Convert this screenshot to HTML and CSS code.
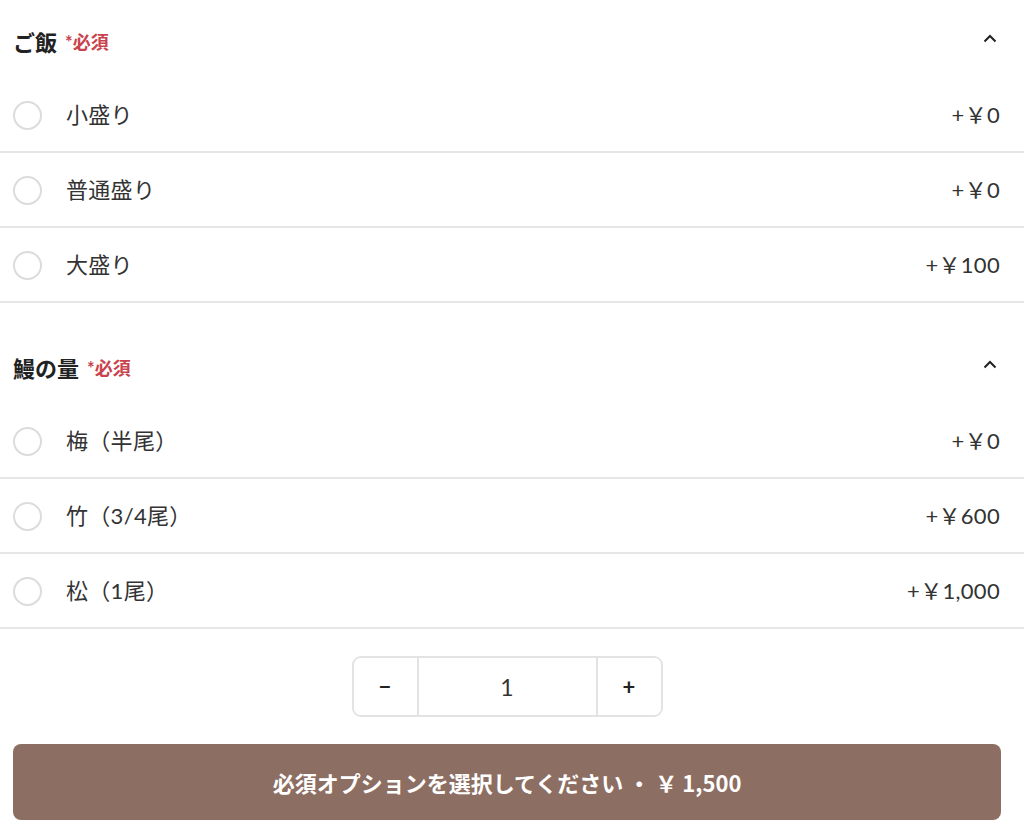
FILE: index.html
```html
<!DOCTYPE html>
<html lang="ja">
<head>
<meta charset="utf-8">
<link rel="stylesheet" href="styles.css">
</head>
<body>
<div class="page">
  <section class="group">
    <div class="group-head">
      <h2 class="group-title">ご飯<span class="req">*必須</span></h2>
      <svg class="chev" viewBox="0 0 14 9" width="14" height="9"><path d="M1.5 7.5 L7 2 L12.5 7.5" fill="none" stroke="#222" stroke-width="2"/></svg>
    </div>
    <div class="opt"><span class="radio"></span><span class="label">小盛り</span><span class="price">+￥0</span></div>
    <div class="opt"><span class="radio"></span><span class="label">普通盛り</span><span class="price">+￥0</span></div>
    <div class="opt"><span class="radio"></span><span class="label">大盛り</span><span class="price">+￥100</span></div>
  </section>
  <section class="group">
    <div class="group-head">
      <h2 class="group-title">鰻の量<span class="req">*必須</span></h2>
      <svg class="chev" viewBox="0 0 14 9" width="14" height="9"><path d="M1.5 7.5 L7 2 L12.5 7.5" fill="none" stroke="#222" stroke-width="2"/></svg>
    </div>
    <div class="opt"><span class="radio"></span><span class="label">梅（半尾）</span><span class="price">+￥0</span></div>
    <div class="opt"><span class="radio"></span><span class="label">竹（3/4尾）</span><span class="price">+￥600</span></div>
    <div class="opt"><span class="radio"></span><span class="label">松（1尾）</span><span class="price">+￥1,000</span></div>
  </section>
  <div class="qty-wrap">
    <div class="qty">
      <button class="qty-btn">−</button>
      <span class="qty-val">1</span>
      <button class="qty-btn">+</button>
    </div>
  </div>
  <div class="cta-wrap">
    <button class="cta">必須オプションを選択してください ・ ￥ 1,500</button>
  </div>
</div>
</body>
</html>
```
FILE: styles.css
```css
* { box-sizing: border-box; }
html, body { margin: 0; padding: 0; background: #fff; }
body {
  font-family: Lato, "Noto Sans CJK JP", sans-serif;
  color: #333;
  width: 1024px;
  height: 834px;
  overflow: hidden;
}
.group + .group { margin-top: 23px; }
.group-head {
  display: flex;
  align-items: center;
  justify-content: space-between;
  height: 78px;
  padding: 4px 27px 0 13px;
}
.group-title {
  margin: 0;
  font-size: 22px;
  font-weight: 700;
  color: #222;
  display: flex;
  align-items: center;
}
.req {
  color: #c9434e;
  font-size: 18px;
  margin-left: 8px;
  font-weight: 700;
}
.chev { display: block; margin-top: -6px; }
.opt {
  display: flex;
  align-items: center;
  height: 75px;
  padding: 0 24px 0 13px;
  border-bottom: 2px solid #e6e6e6;
  font-size: 22px;
}
.radio {
  width: 29px;
  height: 29px;
  border-radius: 50%;
  border: 2px solid #dcdcdc;
  flex: none;
  margin-top: 1px;
}
.label {
  margin-left: 24px;
  margin-bottom: 3px;
  flex: 1;
  color: #333;
  letter-spacing: 0.3px;
}
.price { color: #333; letter-spacing: 0.3px; margin-bottom: 3px; }
.qty-wrap {
  display: flex;
  justify-content: center;
  padding: 27px 23px 0 13px;
}
.qty {
  display: flex;
  width: 311px;
  height: 61px;
  border: 2px solid #e3e3e3;
  border-radius: 9px;
  overflow: hidden;
}
.qty-btn {
  width: 63px;
  border: 0;
  background: #fff;
  font-family: Lato, "Noto Sans CJK JP", sans-serif;
  font-size: 22px;
  font-weight: 700;
  color: #222;
  padding: 0;
}
.qty-val {
  flex: 1;
  display: flex;
  align-items: center;
  justify-content: center;
  border-left: 2px solid #e3e3e3;
  border-right: 2px solid #e3e3e3;
  font-size: 23px;
  color: #333;
}
.cta-wrap { padding: 27px 23px 0 13px; }
.cta {
  width: 100%;
  height: 76px;
  border: 0;
  border-radius: 8px;
  background: #8d6e62;
  color: #fff;
  font-family: "Noto Sans CJK JP", sans-serif;
  font-size: 22px;
  font-weight: 700;
  padding: 0;
}
```
